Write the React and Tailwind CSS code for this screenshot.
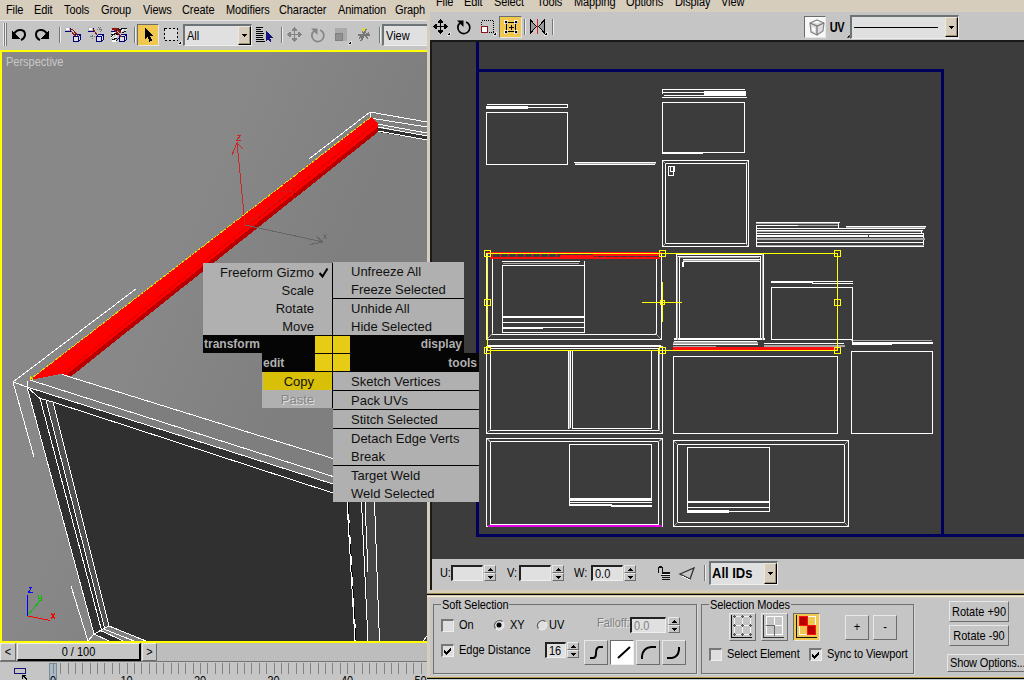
import React from "react";

const T = ({ children, className = "" }) => (
  <span className={"inline-block origin-center scale-y-110 whitespace-pre text-[11px] leading-[14px] " + className}>{children}</span>
);

/* ---------- drawing helpers (pixel aligned) ---------- */
// [x1, x2, y, color?, thickness?]
const H = ({ d }) => d.map(([a, b, y, c = "#fff", t = 1], i) => <rect key={i} x={a} y={y} width={b - a + 1} height={t} fill={c} />);
// [x, y1, y2, color?, thickness?]
const V = ({ d }) => d.map(([x, a, b, c = "#fff", t = 1], i) => <rect key={i} x={x} y={a} width={t} height={b - a + 1} fill={c} />);
// [x1, y1, x2, y2, color?]
const Box = ({ d }) =>
  d.map(([x, y, x2, y2, c = "#fff"], i) => (
    <rect key={i} x={x + 0.5} y={y + 0.5} width={x2 - x} height={y2 - y} fill="none" stroke={c} />
  ));
const Icon = ({ x, y, w, h, children }) => (
  <svg className="block shrink-0" width={w} height={h} viewBox={`${x} ${y} ${w} ${h}`} shapeRendering="crispEdges">
    {children}
  </svg>
);

/* ---------- small controls ---------- */
const raised = "border border-t-[#e8e8e8] border-l-[#e8e8e8] border-r-[#6c6c6c] border-b-[#6c6c6c] bg-[#c5c5c5]";
const sunken = "border border-t-[#6c6c6c] border-l-[#6c6c6c] border-r-[#e8e8e8] border-b-[#e8e8e8]";

const Arrow = () => (
  <svg width="5" height="3" viewBox="0 0 5 3" shapeRendering="crispEdges">
    <path d="M0 0h5v1h-1v1h-1v1h-1v-1h-1v-1h-1z" />
  </svg>
);
const DropButton = ({ className }) => (
  <div className={"flex items-center justify-center border border-t-[#efe7d8] border-l-[#efe7d8] border-r-black border-b-black bg-[#d6cdbd] shadow-[inset_-1px_-1px_0_#a09070] " + className}>
    <Arrow />
  </div>
);
const Spinner = () => (
  <div className="flex h-4 w-3 shrink-0 flex-col">
    <div className={"flex flex-1 items-center justify-center " + raised}>
      <svg width="5" height="3" viewBox="0 0 5 3" shapeRendering="crispEdges"><path d="M2 0h1v1h1v1h1v1h-5v-1h1v-1h1z" /></svg>
    </div>
    <div className={"flex flex-1 items-center justify-center " + raised}>
      <Arrow />
    </div>
  </div>
);
const Field = ({ className, children }) => (
  <div className={"flex h-4 shrink-0 items-center border-t-2 border-l-2 border-r border-b border-t-[#222] border-l-[#222] border-r-[#eee] border-b-[#eee] bg-[#e0e0e0] pl-0.5 " + className}>
    <T>{children}</T>
  </div>
);
const Check = ({ on }) => (
  <div className="flex h-[13px] w-[13px] shrink-0 items-center justify-center border-t-2 border-l-2 border-r border-b border-t-[#777] border-l-[#777] border-r-[#eee] border-b-[#eee] bg-[#dedede]">
    {on && (
      <svg width="8" height="8" viewBox="0 0 8 8" shapeRendering="crispEdges">
        <path d="M0 3h1v1h1v1h1v-1h1v-1h1v-1h1v-1h1v3h-1v1h-1v1h-1v1h-1v1h-1v-1h-1v-1h-1z" />
      </svg>
    )}
  </div>
);
const Radio = ({ on }) => (
  <svg className="shrink-0" width="12" height="12" viewBox="0 0 12 12">
    <circle cx="6" cy="6" r="5" fill="#e0e0e0" stroke="#eee" />
    <path d="M2.5 9.5A5 5 0 0 1 9.5 2.5" fill="none" stroke="#666" strokeWidth="1.3" />
    {on && <circle cx="6" cy="6" r="2.5" />}
  </svg>
);
const Sep = ({ x }) => (
  <Icon x={x} y={22} w={3} h={26}>
    <V d={[[x, 27, 42, "#777"], [x + 1, 27, 42, "#eee"]]} />
  </Icon>
);

/* ---------- shared glyphs ---------- */
const MoveGlyph = ({ cx, cy, c }) => (
  <g fill={c}>
    <rect x={cx} y={cy - 6} width="1" height="13" />
    <rect x={cx - 6} y={cy} width="13" height="1" />
    {[0, 90, 180, 270].map((a) => (
      <path key={a} transform={`rotate(${a} ${cx + 0.5} ${cy + 0.5})`} d={`M${cx} ${cy - 7}h1v1h1v1h1v2h-5v-2h1v-1h1z`} />
    ))}
  </g>
);
const RotateGlyph = ({ cx, cy, c }) => (
  <g shapeRendering="auto">
    <path d={`M${cx + 2} ${cy - 5}A6 6 0 1 1 ${cx - 4} ${cy - 4}`} fill="none" stroke={c} strokeWidth="1.7" />
    <path d={`M${cx - 7} ${cy - 6.5}h6.5v6.5z`} fill={c} />
  </g>
);
const Corner = ({ x, y }) => <path d={`M${x} ${y}v-3h-1v1h-1v1h-1v1z`} fill="#000" stroke="#fff" strokeWidth=".6" />;
const Cube = ({ x, y }) => (
  <g>
    <path d={`M${x + 0.5} ${y + 2.5}l2-2h5v5l-2 2h-5z`} fill="#ddd" stroke="#00007c" />
    <path d={`M${x + 0.5} ${y + 2.5}h5v5M${x + 5.5} ${y + 2.5}l2-2`} fill="none" stroke="#00007c" />
  </g>
);

/* ---------- main window ---------- */
const MAIN_MENU = [
  ["File", "w-7"], ["Edit", "w-[30px]"], ["Tools", "w-[37px]"], ["Group", "w-[42px]"], ["Views", "w-[39px]"],
  ["Create", "w-11"], ["Modifiers", "w-[53px]"], ["Character", "w-[59px]"], ["Animation", "w-[57px]"], ["Graph", "w-8"],
];

function MainToolbar() {
  return (
    <div className="flex h-[30px] shrink-0 items-center border-t border-[#e6e6e6] bg-[#c5c5c5] pb-px">
      <Icon x={0} y={22} w={10} h={26}>
        <V d={[[3, 23, 45, "#eee"], [4, 23, 45, "#777"], [5, 23, 45, "#eee"], [6, 23, 45, "#777"]]} />
      </Icon>
      <Icon x={10} y={22} w={49} h={26}>
        <g shapeRendering="auto" fill="none" stroke="#000" strokeWidth="2">
          <path d="M14 34C17 28 25 29 25 34.500C25 37 23 39 21 40" />
          <path d="M47 34C44 28 36 29 36 34.500C36 37 38 39 40 40" />
        </g>
        <path d="M12 30v9h8zM49 30v9h-8z" />
      </Icon>
      <Sep x={59} />
      <Icon x={62} y={22} w={72} h={26}>
        {[65, 88, 111].map((x) => (
          <g key={x}>
            <rect x={x + 0.5} y="27.500" width="4" height="3" fill="#fff" stroke="#bbb" />
            <path d={`M${x} 31.500h5.500v-4`} fill="none" stroke="#00007c" />
            <Cube x={x + 8} y={34} />
          </g>
        ))}
        <path d="M70 29l3 1 5 6M72 33l4 3M71 31l4 4" fill="none" stroke="#8e1515" />
        <path d="M93 29l2 3 2 3" fill="none" stroke="#8e1515" strokeWidth="1.300" />
        <path d="M97 29h6M100 27v5M98 27l4 4M91 37l3-3M90 36h5M92 39v-4" stroke="#777" strokeDasharray="1 1" />
        <path d="M111 38l4-4M113 40l4-5M120 32l5-4M123 33l4-4M112 34l3-2M112 41h4" stroke="#fff" strokeWidth="1.300" />
        <path d="M111 37l4-4 3 2M112 40l5-2M119 31l4-3 4 1M122 33l4-2M111 34h4M116 41l3-3M118 28l3 3" stroke="#111" fill="none" />
        <path d="M112 29h5l4 4M115 30l6 7" stroke="#8e1515" fill="none" strokeWidth="1.600" />
      </Icon>
      <Sep x={134} />
      <div className={"h-[22px] w-[22px] shrink-0 bg-[#f0c850] " + sunken}>
        <Icon x={138} y={25} w={20} h={20}>
          <path d="M145 28v11l2.500-2 2 4.500 2.500-1-2-4.500h4z" />
        </Icon>
      </div>
      <Icon x={159} y={22} w={24} h={26}>
        <rect x="165" y="29" width="12" height="11" fill="#dadada" />
        <rect x="164.500" y="28.500" width="13" height="12" fill="none" stroke="#000" strokeWidth="1.500" strokeDasharray="2 2" />
        <Corner x={181} y={44} />
      </Icon>
      <div className="flex h-[22px] w-[69px] shrink-0 items-stretch border-t-2 border-l-2 border-r border-b border-t-[#6c7478] border-l-[#6c7478] border-r-[#eee] border-b-[#eee] bg-[#e0e0e0]">
        <div className="flex flex-1 items-center pl-0.5"><T>All</T></div>
        <DropButton className="w-[13px]" />
      </div>
      <Icon x={252} y={22} w={29} h={26}>
        <H d={[[256, 262, 27, "#000"], [256, 260, 29, "#000"], [256, 262, 31, "#000"], [256, 263, 33, "#000"], [256, 262, 35, "#000"], [256, 262, 37, "#000"], [256, 263, 39, "#000"], [256, 264, 41, "#000"]]} />
        <path d="M266 31v10l2-2 2 3 1.500-1-1.500-3h3z" fill="#15157c" />
      </Icon>
      <Sep x={281} />
      <Icon x={284} y={22} w={95} h={26}>
        <MoveGlyph cx={294} cy={34} c="#858585" />
        <RotateGlyph cx={318} cy={35} c="#858585" />
        <rect x="335" y="28" width="12" height="13" fill="#aaa" />
        <rect x="335.500" y="33.500" width="7" height="7" fill="#909090" stroke="#808080" />
        <Corner x={351} y={44} />
        <path d="M358 35h12M361 41l3-6 2-6M362 31l6 8M359 38l10-5" stroke="#777" fill="none" strokeWidth="1.400" />
        <rect x="362" y="28" width="3" height="3" fill="#e6dc28" />
      </Icon>
      <Sep x={379} />
      <div className="flex h-[22px] min-w-0 flex-1 items-center border-t-2 border-l-2 border-b border-t-[#6c7478] border-l-[#6c7478] border-b-[#eee] bg-[#e0e0e0] pl-0.5"><T>View</T></div>
    </div>
  );
}

function Perspective() {
  const lines = [
    "M13 382L27 387L40 398.500L53 402L333 493", "M27 387L333 484", "M30 380L333 476.500", "M62 374.500L333 458.500",
    "M13 382L34 457", "M13 382L136.500 288.500", "M27 381V387L94 634", "M40 398.500L102 632", "M46 400L105 630", "M53 402L109 626",
    "M71 586L88 641L94 634L109 626L146 641", "M94 634L109 641", "M102 631L123 641", "M105 629.500L134 641",
    "M347 502L355 641", "M361.500 502L368 641", "M365 502L368 572", "M374.500 502L379.500 641", "M423 641L427 636",
    "M309 159L370 112L427 122", "M370 112V118L427 127", "M377 124L427 133", "M378 127L427 136", "M378 131L427 140",
  ];
  return (
    <div className="relative h-[593px] shrink-0 overflow-hidden border-y-2 border-l-2 border-[#ffff00] bg-[#808080]">
      <svg className="block" width="425" height="589" viewBox="2 52 425 589" shapeRendering="crispEdges">
        <defs>
          <linearGradient id="bg" x1="0" y1="0" x2="1" y2=".6">
            <stop offset="0" stopColor="#888" /><stop offset=".45" stopColor="#888" /><stop offset=".75" stopColor="#7f7f7f" />
          </linearGradient>
        </defs>
        <rect x="0" y="50" width="427" height="593" fill="url(#bg)" />
        <path d="M27 387L392 500H427V643H112L94 634Z" fill="#303030" />
        <path d="M30 380L62 375L333 458V484L27 387Z" fill="#7e7e7e" />
        <path d="M46 400L53 402L109 626L105 630Z" fill="#505050" />
        <path d="M365 502H374L380 641H368Z" fill="#474747" />
        <path d="M375 502H427V641H380Z" fill="#3e3e3e" />
        <path d="M94 634L109 626L146 641H88Z" fill="#808080" />
        <path d="M94 634L102 631L123 641H108Z" fill="#303030" />
        <path d="M378 128L427 136V140L378 132Z" fill="#303030" />
        {lines.map((d) => <path key={d} d={d} fill="none" stroke="#fff" />)}
        <path d="M348 502L356 641" fill="none" stroke="#fff" />
        <path d="M348 502L356 641" fill="none" stroke="#000" strokeDasharray="12 9" />
        <path d="M30 380L371 117L378 124V132L71 376L61 374Z" fill="#f00" />
        <path d="M66 375L378 127V132L71 376.500Z" fill="#b80000" />
        <path d="M63 374L376 124" stroke="#e00000" />
        <path d="M30 379.500L371 117" stroke="#e8e000" strokeDasharray="3 1" />
        <path d="M30 376l3 4" stroke="#e8e000" />
        <g fill="none" stroke="#c82828">
          <path d="M245 225L237 142M232 155L237 143L243 149" />
          <path d="M236.500 135.500h4l-4 5h4" />
          <path d="M246 225L292 189M280 191h12v5M290 183l2 4 3-5" stroke="#d01818" />
        </g>
        <g fill="none" stroke="#666">
          <path d="M245 225L323 242M316 236L323 242L310 244.500M323 234l4 5M327 234l-4 5" />
        </g>
        <path d="M27.500 595V616M28.500 587.500h3l-3 5h4" stroke="#0000ff" fill="none" />
        <path d="M28 615L40 601M38.500 595v3h3v-3M41.500 598v2h-3" stroke="#00c000" fill="none" />
        <path d="M28 616L50 620.500M51 613l4 6M55 613l-4 6" stroke="#ff0000" fill="none" />
      </svg>
      <div className="absolute top-[3px] left-1 flex text-[#c9c9c9]"><T>Perspective</T></div>
    </div>
  );
}

function Timeline() {
  return (
    <>
      <div className="flex h-[18px] shrink-0 bg-[#bdbdbd]">
        <div className={"flex w-4 items-center justify-center " + raised}><T>{"<"}</T></div>
        <div className="ml-px flex w-[124px] items-center justify-center border-t border-l border-r-2 border-b-2 border-t-[#eee] border-l-[#eee] border-r-black border-b-black bg-[#c5c5c5]"><T>0 / 100</T></div>
        <div className={"ml-px flex w-[15px] items-center justify-center " + raised}><T>{">"}</T></div>
      </div>
      <div className="relative h-[19px] shrink-0 overflow-hidden border-t border-[#777] bg-[#c5c5c5]">
        <svg className="block" width="427" height="18" viewBox="0 662 427 18" shapeRendering="crispEdges">
          <rect x="49.500" y="663.500" width="7" height="18" fill="#a8bac8" stroke="#7b8c98" />
          <V d={Array.from({ length: 51 }, (_, i) => [Math.round(53 + i * 7.35), 663, 673, "#808484"])} />
          <rect x="14.500" y="668.500" width="11" height="5" fill="none" stroke="#15157c" />
          <path d="M22 675h4v1h-2l3 3-1 1-3-3v2h-1z" />
        </svg>
        <div className="absolute top-[12px] left-[50px] flex">
          {["0", "10", "20", "30", "40", "50"].map((n, i) => (
            <T key={n} className={i === 0 ? "w-[70.500px]" : "w-[73.500px]"}>{n}</T>
          ))}
        </div>
      </div>
    </>
  );
}

/* ---------- UV editor ---------- */
const UV_MENU = [
  ["File", "w-7"], ["Edit", "w-[30px]"], ["Select", "w-[43px]"], ["Tools", "w-[37px]"], ["Mapping", "w-[52px]"],
  ["Options", "w-[49px]"], ["Display", "w-[46px]"], ["View", "w-10"],
];
const G = "#a8a8a8";
const Y = "#ffff00";
const R = "#ff1010";

function UVCanvas() {
  return (
    <svg className="block h-[517px] w-[592px] shrink-0 bg-[#3c3c3c]" viewBox="432 42 592 517" shapeRendering="crispEdges">
      <V d={[[476, 42, 536, "#00005c", 3], [941, 69, 536, "#00005c", 3]]} />
      <H d={[[476, 943, 69, "#00005c", 3], [476, 1024, 534, "#00005c", 3]]} />
      <Box d={[
        [486, 112, 567, 164], [662, 102, 744, 152], [662, 160, 748, 246], [665, 163, 746, 243],
        [756, 233, 923, 246], [771, 287, 852, 339], [851, 351, 932, 433], [673, 356, 837, 433],
        [486, 253, 661, 339], [492, 257, 656, 334], [502, 265, 584, 332],
        [486, 346, 662, 433], [490, 348, 658, 430], [486, 438, 662, 526], [490, 441, 658, 524],
        [569, 444, 651, 498], [673, 440, 848, 526], [677, 444, 844, 522], [687, 447, 769, 511],
        [668, 166, 673, 175], [670, 166, 674, 171],
      ]} />
      <H d={[
        [487, 567, 104], [486, 567, 107], [486, 527, 106, "#fff", 3],
        [574, 655, 162], [575, 655, 163, G], [575, 654, 164],
        [662, 744, 89], [662, 704, 92], [704, 745, 91, "#fff", 4], [664, 745, 95], [662, 746, 97], [662, 702, 153],
        [756, 839, 222], [756, 838, 223, G], [756, 838, 225, G], [756, 797, 225], [846, 925, 226], [846, 925, 227, G],
        [756, 924, 228], [756, 922, 230], [756, 920, 231, G], [756, 923, 235, "#fff", 2], [756, 924, 238, G, 2], [756, 923, 242], [756, 923, 245, G],
        [771, 812, 281, "#fff", 2], [812, 852, 281], [812, 852, 283],
        [851, 931, 340, G], [852, 932, 342, "#fff", 2], [852, 891, 344],
        [764, 843, 343], [764, 844, 345, G, 2], [674, 764, 338, "#fff", 2], [674, 756, 341], [673, 757, 342, G, 2], [673, 757, 344], [673, 715, 346, G],
        [502, 579, 261], [503, 578, 263, G], [502, 584, 316, "#fff", 2], [502, 583, 322], [502, 542, 327, "#fff", 2], [542, 584, 327],
        [569, 651, 498, "#fff", 3], [569, 651, 502], [569, 611, 504, "#fff", 2], [611, 651, 505, "#fff", 2],
        [687, 769, 501, "#fff", 2], [687, 769, 507], [687, 728, 510, "#fff", 3],
        [488, 661, 526, "#e000e0"], [488, 661, 525, "#e000e0"], [676, 763, 254], [678, 759, 256], [679, 758, 257, G], [683, 759, 259], [683, 758, 260, G], [683, 759, 261],
        [488, 660, 345],
      ]} />
      <V d={[
        [567, 104, 107], [662, 89, 93], [569, 499, 504], [756, 226, 246], [838, 222, 227], [921, 230, 233],
        [676, 254, 339], [677, 256, 339, G], [679, 256, 337], [682, 262, 266, "#fff", 2], [760, 256, 339], [762, 254, 339, G], [763, 254, 339],
        [584, 261, 265], [568, 351, 428], [569, 351, 428, G], [570, 351, 427], [572, 351, 428], [651, 351, 428], [659, 348, 430, G], [852, 339, 343],
        [486, 254, 338, "#fff", 2],
      ]} />
      <H d={[[573, 651, 428]]} />
      <path d="M663 161l3 3M748 161l-3 3M663 246l3-3M748 246l-3-3M487 339l6-6M661 339l-6-6M487 433l4-4M662 433l-4-4M487 439l4 3M662 439l-4 3M674 441l4 4M848 441l-4 4M674 526l4-4M848 526l-4-4" stroke={G} />
      <H d={[[868, 868, 235, "#3c3c3c", 2], [487, 661, 252, R, 2], [490, 659, 257, R, 2], [560, 593, 255, R, 2], [593, 659, 254, R, 2], [673, 837, 347, R, 3]]} />
      <V d={Array.from({ length: 21 }, (_, i) => [492 + i * 8, 253, 257, R])} />
      <Box d={[[487, 253, 837, 350, Y]]} />
      <H d={[[642, 681, 302, Y]]} />
      <V d={[[662, 282, 321, Y]]} />
      <Box d={[[660, 300, 664, 304, Y], ...[[487, 253], [662, 253], [837, 253], [487, 302], [837, 302], [487, 350], [662, 350], [837, 350]].map(([x, y]) => [x - 3, y - 3, x + 3, y + 3, Y])]} />
    </svg>
  );
}

function UVToolbar() {
  return (
    <div className="flex h-[28px] shrink-0 items-center bg-[#c5c5c5] pt-[2px]">
      <Icon x={430} y={14} w={69} h={26}>
        <MoveGlyph cx={440} cy={26} c="#000" />
        <Corner x={450} y={35} />
        <RotateGlyph cx={464} cy={27} c="#000" />
        <rect x="481.500" y="20.500" width="12" height="12" fill="none" stroke="#000" strokeDasharray="1 1" />
        <rect x="481.500" y="26.500" width="6" height="6" fill="#fff" stroke="#8e1515" strokeWidth="1.500" />
        <Corner x={496} y={35} />
      </Icon>
      <div className={"h-[22px] w-[23px] shrink-0 bg-[#f0c850] " + sunken}>
        <Icon x={500} y={17} w={21} h={20}>
          <rect x="506.500" y="22.500" width="9" height="9" fill="none" stroke="#000" />
          {[[506, 22], [516, 22], [506, 32], [516, 32]].map(([x, y]) => <rect key={x + "-" + y} x={x - 1.5} y={y - 1.5} width="3" height="3" fill="#000" stroke="#fff" strokeWidth=".8" />)}
          <path d="M509 27.500h5M511.500 25v5" stroke="#000" />
        </Icon>
      </div>
      <Icon x={522} y={14} w={282} h={26}>
        <V d={[[524, 19, 34, "#777"], [525, 19, 34, "#eee"], [552, 19, 34, "#777"], [553, 19, 34, "#eee"]]} />
        <path d="M530.500 20v13l6-6.500zM544.500 20v13l-6-6.500z" fill="#999" stroke="#000" />
        <V d={[[537, 19, 33, "#e02020"]]} />
        <Corner x={547} y={35} />
      </Icon>
      <div className={"h-[22px] w-[22px] shrink-0 bg-[#f8f8f8] " + sunken}>
        <svg width="20" height="20" viewBox="805 17 20 20">
          <path d="M810 23l7-3 7 3-1 8-6 4-6-3z" fill="#ddd" stroke="#888" strokeWidth="1.200" />
          <path d="M810 23l7 3 7-3M817 26v9" fill="none" stroke="#777" strokeWidth="1.300" />
          <path d="M812 27l3 1v4l-3-2zM814 22l3-1 3 1-3 1.500z" fill="#fff" />
        </svg>
      </div>
      <div className="relative flex w-[24px] shrink-0 justify-center">
        <span className="inline-block scale-y-125 pr-0.5 text-[11px] leading-[14px] font-bold tracking-[-0.5px]">UV</span>
        <svg className="absolute right-0 -bottom-1" width="4" height="4" viewBox="0 0 4 4"><path d="M4 0v4h-4z" fill="#000" stroke="#fff" strokeWidth=".6" /></svg>
      </div>
      <div className="flex h-6 w-[109px] shrink-0 items-stretch border-t-2 border-l-2 border-r border-b border-t-[#6c7478] border-l-[#6c7478] border-r-[#eee] border-b-[#eee] bg-[#e0e0e0]">
        <div className="flex flex-1 items-center pr-[7px] pl-0.5"><div className="h-px w-full bg-black" /></div>
        <DropButton className="mb-px w-[13px]" />
      </div>
    </div>
  );
}

function CoordinateBar() {
  return (
    <div className="flex h-[31px] shrink-0 items-center bg-[#c5c5c5] pb-[3px] pl-2">
      <T className="w-[11px] tracking-[-0.300px]">U:</T>
      <Field className="w-8" /><span className="w-px" /><Spinner />
      <T className="ml-[11px] w-3">V:</T>
      <Field className="w-8" /><span className="w-px" /><Spinner />
      <T className="ml-[10px] w-[17px]">W:</T>
      <Field className="w-8">0.0</Field><span className="w-px" /><Spinner />
      <Icon x={636} y={562} w={73} h={24}>
        <path d="M658.500 574v-4q0-2 2-2t2 2v5" fill="none" stroke="#111" strokeWidth="1.500" />
        <H d={[[662, 669, 573, "#111", 2], [661, 669, 576, "#111"], [662, 669, 578, "#111"], [662, 669, 580, "#111"], [662, 669, 575, "#eee"]]} />
        <path d="M680 575l14-6-4 11z" fill="none" stroke="#333" strokeWidth="1.300" shapeRendering="auto" />
        <path d="M682 577l8 4" stroke="#eee" />
        <V d={[[704, 566, 581, "#777"], [705, 566, 581, "#eee"]]} />
      </Icon>
      <div className="flex h-6 w-[69px] shrink-0 items-stretch border-t-2 border-l-2 border-r border-b border-t-[#6c7478] border-l-[#6c7478] border-r-[#eee] border-b-[#eee] bg-[#e0e0e0]">
        <div className="flex flex-1 items-center pl-px whitespace-nowrap"><span className="inline-block scale-y-110 text-[13px] font-bold">All IDs</span></div>
        <DropButton className="w-[13px]" />
      </div>
    </div>
  );
}

const Group = ({ title, className, children }) => (
  <div className={"relative h-[70px] shrink-0 border border-[#707070] shadow-[1px_1px_0_#d8d8d8] " + className}>
    <div className="absolute -top-[7px] left-[7px] flex bg-[#c5c5c5] px-px"><T className="tracking-[-0.100px]">{title}</T></div>
    {children}
  </div>
);

const Curve = ({ d, on }) => (
  <div className={"h-[25px] w-6 shrink-0 " + (on ? "border border-t-[#6c6c6c] border-l-[#6c6c6c] border-r-[#eee] border-b-[#eee] bg-white" : raised)}>
    <svg width="22" height="23" viewBox="0 0 22 23"><path d={d} fill="none" stroke="#000" strokeWidth="2" /></svg>
  </div>
);

function OptionsPanel() {
  return (
    <div className="flex h-[78px] shrink-0 items-start bg-[#c5c5c5] pt-[6px] pl-[3px]">
      <Group title="Soft Selection" className="w-[264px]">
        <div className="mt-[12px] flex h-[16px] items-center pl-[7px]">
          <Check /><T className="ml-[5px] w-[34px]">On</T>
          <Radio on /><T className="ml-[5px] w-[26px]">XY</T>
          <Radio /><T className="ml-px w-12">UV</T>
          <T className="-mt-1 w-[33px] text-[#808080] [text-shadow:1px_1px_0_#e8e8e8]">Falloff:</T>
          <Field className="w-9 text-[#808080]">0.0</Field><span className="w-[2px]" /><Spinner />
        </div>
        <div className="mt-[7px] flex h-[25px] items-center pl-[7px]">
          <div className="flex items-center pb-[5px]"><Check on /><T className="ml-[5px] w-[86px]">Edge Distance</T>
            <Field className="w-[21px]">16</Field><span className="w-px" /><Spinner /></div>
          <div className="ml-[5px] flex gap-[2px]">
            <Curve d="M5 17h3q3 0 3-5t3-6h4" />
            <Curve on d="M7 17L19 6" />
            <Curve d="M5 18v-3q1-8 9-9h5" />
            <Curve d="M4 17h5q6-1 7-8v-3" />
          </div>
        </div>
      </Group>
      <Group title="Selection Modes" className="ml-1 w-[213px]">
        <div className="mt-[8px] flex h-[28px] items-center pl-[27px]">
          <div className={"h-7 w-[27px] " + raised}>
            <Icon x={730} y={614} w={25} h={26}>
              <path d="M731.500 615v22.500h20" fill="none" stroke="#111" strokeWidth="1.500" />
              <path d="M734 616.500h16v18h-16zM742.500 616v18M734 625.500h16" fill="none" stroke="#f4f4f4" />
              {[734, 742, 750].map((x) => [616, 625, 634].map((y) => <path key={x + "," + y} d={`M${x - 1} ${y + 0.5}h3M${x + 0.5} ${y - 1}v3`} stroke="#555" />))}
            </Icon>
          </div>
          <div className={"ml-[5px] h-7 w-[27px] " + raised}>
            <Icon x={762} y={614} w={25} h={26}>
              <path d="M763.500 615v22.500h20" fill="none" stroke="#333" />
              <path d="M766.500 616.500h16v18h-16zM774.500 616v18M766 625.500h16" fill="none" stroke="#fff" strokeWidth="1.500" />
              <path d="M766 625.500h8.500v10" fill="none" stroke="#666" strokeWidth="1.500" />
            </Icon>
          </div>
          <div className={"ml-[5px] h-7 w-[27px] bg-[#f0c850] " + sunken}>
            <Icon x={794} y={614} w={25} h={26}>
              <path d="M796.500 615v22.500h20" fill="none" stroke="#111" />
              <path d="M799.500 616.500h16v18h-16z" fill="none" stroke="#fff" />
              <path d="M799.500 616.500h8v9h-8zM807.500 625.500h8v9h-8z" fill="#b80000" stroke="#ff1010" strokeWidth="1.500" />
            </Icon>
          </div>
          <div className={"ml-[25px] flex h-[25px] w-6 items-center justify-center " + raised}><T>+</T></div>
          <div className={"ml-1 flex h-[25px] w-6 items-center justify-center " + raised}><T>-</T></div>
        </div>
        <div className="mt-[5px] flex h-4 items-center pl-[7px]">
          <Check /><T className="ml-[5px] w-[82px] tracking-[-0.100px]">Select Element</T>
          <Check on /><T className="ml-[5px] tracking-[-0.100px]">Sync to Viewport</T>
        </div>
      </Group>
      <div className="-mt-[3px] ml-[33px] flex shrink-0 flex-col">
        <div className={"ml-[2px] flex h-[21px] w-[60px] items-center justify-center " + raised}><T>Rotate +90</T></div>
        <div className={"mt-[3px] ml-[2px] flex h-[21px] w-[60px] items-center justify-center " + raised}><T>Rotate -90</T></div>
        <div className={"mt-[8px] flex h-[18px] w-[80px] items-center pl-[2px] " + raised}><T className="tracking-[-0.150px]">Show Options...</T></div>
      </div>
    </div>
  );
}

/* ---------- quad menu ---------- */
const Item = ({ children, right, className = "" }) => (
  <div className={"flex h-[18px] items-start pt-px " + (right ? "pl-[18px] " : "justify-end pr-[18px] ") + className}>
    <span className="text-[13px] leading-[18px] whitespace-nowrap">{children}</span>
  </div>
);
const Line = () => <div className="h-px bg-black" />;
const Head = ({ children, className }) => (
  <div className={"flex h-[18px] items-center bg-[#050505] text-[12px] leading-[18px] font-bold text-[#b0b0b0] " + className}>{children}</div>
);
const Yellow = () => <div className="h-[17px] w-[17px] shrink-0 bg-[#e6cc14]" />;

function QuadMenu() {
  return (
    <div className="absolute top-[262px] left-[203px] grid w-[276px] grid-cols-[130px_146px] text-[#101010]">
      <div className="mt-px border-r border-black bg-[#b0b0b0]">
        <Item className="relative">
          Freeform Gizmo
          <svg className="absolute top-[5px] right-[3px]" width="10" height="10" viewBox="0 0 10 10"><path d="M.5 5l3 3.500L8.500.5" fill="none" stroke="#000" strokeWidth="2" /></svg>
        </Item>
        <Item>Scale</Item><Item>Rotate</Item><Item>Move</Item>
      </div>
      <div className="w-[131px] bg-[#b0b0b0]">
        <Item right>Unfreeze All</Item><Item right>Freeze Selected</Item><Line />
        <Item right>Unhide All</Item><Item right>Hide Selected</Item>
      </div>
      <Head className="justify-between pr-px pl-px"><span>transform</span><Yellow /></Head>
      <Head className="w-[131px] justify-between pr-[2px]"><Yellow /><span>display</span></Head>
      <Head className="ml-[59px] h-[19px] justify-between pr-px pl-px"><span>edit</span><Yellow /></Head>
      <Head className="h-[19px] justify-between pr-[2px]"><Yellow /><span>tools</span></Head>
      <div className="ml-[59px] h-[36px] border-r border-black bg-[#b0b0b0]">
        <Item className="ml-px bg-[#d8c008]">Copy</Item>
        <Item className="text-[#858585] [text-shadow:1px_1px_0_#e0e0e0]">Paste</Item>
      </div>
      <div className="bg-[#b0b0b0]">
        <Item right>Sketch Vertices</Item><Line />
        <Item right>Pack UVs</Item><Line />
        <Item right>Stitch Selected</Item><Line />
        <Item right>Detach Edge Verts</Item><Item right>Break</Item><Line />
        <Item right>Target Weld</Item><Item right>Weld Selected</Item>
      </div>
    </div>
  );
}

export default function App() {
  return (
    <div className="relative flex h-[680px] w-[1024px] overflow-hidden bg-[#c5c5c5] font-['Liberation_Sans',Arial,sans-serif] text-black">
      <div className="flex w-[427px] shrink-0 flex-col overflow-hidden">
        <div className="flex h-5 shrink-0 items-center bg-[#d6cdbd] pl-[6px]">
          {MAIN_MENU.map(([n, w]) => <div key={n} className={"flex shrink-0 " + w}><T className="tracking-[-0.100px]">{n}</T></div>)}
        </div>
        <MainToolbar />
        <Perspective />
        <Timeline />
      </div>
      <div className="flex w-[597px] shrink-0 flex-col overflow-hidden bg-[#d6cdbd]">
        <div className="flex h-3 shrink-0 items-end overflow-hidden pl-[9px]">
          {UV_MENU.map(([n, w]) => <div key={n} className={"mb-[3px] flex h-[14px] shrink-0 " + w}><T className="tracking-[-0.100px]">{n}</T></div>)}
        </div>
        <div className="ml-[3px] flex flex-col">
          <UVToolbar />
          <div className="flex h-[550px] flex-col border-t-2 border-l-2 border-t-[#1a1a1a] border-l-[#1a1a1a]">
            <UVCanvas />
            <CoordinateBar />
          </div>
        </div>
        <div className="mt-[3px] h-px shrink-0 bg-[#a08c50]" />
        <div className="h-px shrink-0 bg-black" />
        <div className="h-px shrink-0 bg-[#d6cdbd]" />
        <div className="h-px shrink-0 bg-[#f4ecd8]" />
        <div className="h-px shrink-0 bg-[#d6cdbd]" />
        <div className="flex-1 border-l-2 border-[#d6cdbd] pl-px">
          <OptionsPanel />
        </div>
        <div className="h-px shrink-0 bg-[#b09850]" />
        <div className="h-px shrink-0 bg-black" />
        <div className="h-px shrink-0 bg-[#c5d0cc]" />
      </div>
      <QuadMenu />
    </div>
  );
}
